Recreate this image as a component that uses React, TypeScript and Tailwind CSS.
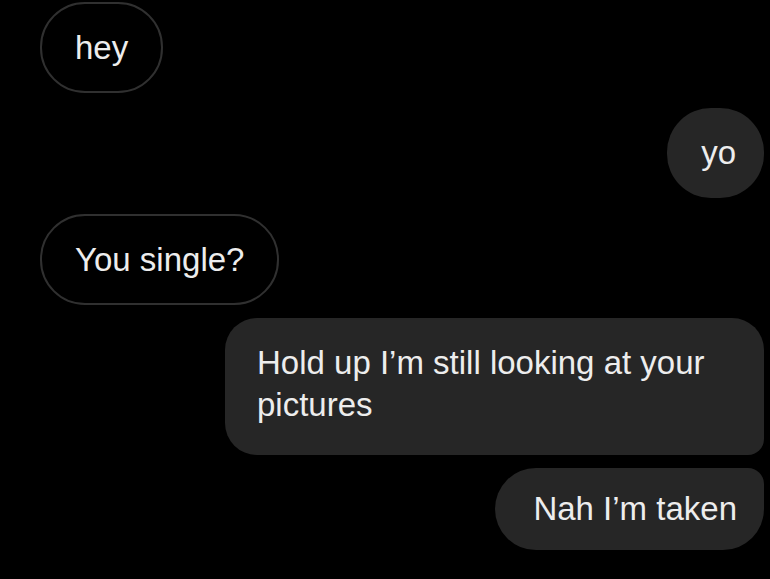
const font = { fontFamily: '"Liberation Sans", Arial, sans-serif' };

function Outgoing({ children, className = "" }: { children: React.ReactNode; className?: string }) {
  return (
    <div
      className={`flex h-[91px] items-center self-start rounded-[45px] border-2 border-[#303030] bg-black px-[33px] text-[33px] leading-[42px] text-[#ededed] ${className}`}
    >
      {children}
    </div>
  );
}

export default function App() {
  return (
    <div
      className="flex h-[579px] w-[770px] flex-col overflow-hidden bg-black pl-[40px] pr-[6px] pt-[2px]"
      style={font}
    >
      <Outgoing>hey</Outgoing>

      <div className="mt-[15px] flex h-[90px] items-center self-end rounded-[44px] bg-[#262626] pl-[34px] pr-[28px] text-[33px] leading-[42px] text-[#ededed]">
        yo
      </div>

      <Outgoing className="mt-[16px]">You single?</Outgoing>

      <div className="mt-[13px] w-[539px] self-end rounded-[32px] rounded-br-[16px] bg-[#262626] pb-[29px] pl-[32px] pr-[24px] pt-[24px] text-[33px] leading-[42px] text-[#ededed]">
        Hold up I’m still looking at your pictures
      </div>

      <div className="mt-[13px] flex h-[82px] items-center self-end rounded-[41px] rounded-tr-[16px] bg-[#262626] pl-[38px] pr-[27px] text-[33px] leading-[42px] text-[#ededed]">
        Nah I’m taken
      </div>
    </div>
  );
}
